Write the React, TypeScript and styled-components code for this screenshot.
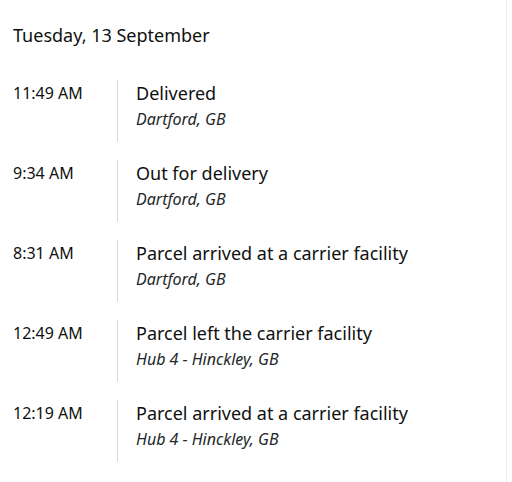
import React from "react";
import styled, { createGlobalStyle } from "styled-components";

const GlobalStyle = createGlobalStyle`
  html, body {
    margin: 0;
    padding: 0;
    background: #ffffff;
  }
  body {
    font-family: "Noto Sans", "Open Sans", sans-serif;
    color: #0f1111;
  }
`;

type TrackingEvent = {
  time: string;
  status: string;
  place: string;
};

const events: TrackingEvent[] = [
  { time: "11:49 AM", status: "Delivered", place: "Dartford, GB" },
  { time: "9:34 AM", status: "Out for delivery", place: "Dartford, GB" },
  { time: "8:31 AM", status: "Parcel arrived at a carrier facility", place: "Dartford, GB" },
  { time: "12:49 AM", status: "Parcel left the carrier facility", place: "Hub 4 - Hinckley, GB" },
  { time: "12:19 AM", status: "Parcel arrived at a carrier facility", place: "Hub 4 - Hinckley, GB" },
];

const App: React.FC = () => {
  return (
    <>
      <GlobalStyle />
      <Page>
        <DayHeading>Tuesday, 13 September</DayHeading>
        <Timeline>
          {events.map((e) => (
            <Row key={e.time + e.status}>
              <Time>{e.time}</Time>
              <Detail>
                <Status>{e.status}</Status>
                <Place>{e.place}</Place>
              </Detail>
            </Row>
          ))}
        </Timeline>
      </Page>
    </>
  );
};

const Page = styled.div`
  width: 507px;
  height: 482px;
  box-sizing: border-box;
  border-right: 1px solid #ececec;
  padding: 22px 0 0 13px;
`;

const DayHeading = styled.h2`
  margin: 0;
  font-size: 18px;
  font-weight: 400;
  line-height: 26px;
`;

const Timeline = styled.div`
  display: flex;
  flex-direction: column;
  gap: 18px;
  margin-top: 32px;
`;

const Row = styled.div`
  display: grid;
  grid-template-columns: 104px 1fr;
  height: 62px;
`;

const Time = styled.div`
  font-size: 16px;
  line-height: 24px;
  padding-top: 1px;
`;

const Detail = styled.div`
  border-left: 1px solid #d5d9d9;
  padding-left: 18px;
  padding-top: 1px;
`;

const Status = styled.div`
  font-size: 18px;
  line-height: 24px;
`;

const Place = styled.div`
  font-size: 16px;
  font-style: italic;
  line-height: 28px;
  color: #232727;
`;

export default App;
